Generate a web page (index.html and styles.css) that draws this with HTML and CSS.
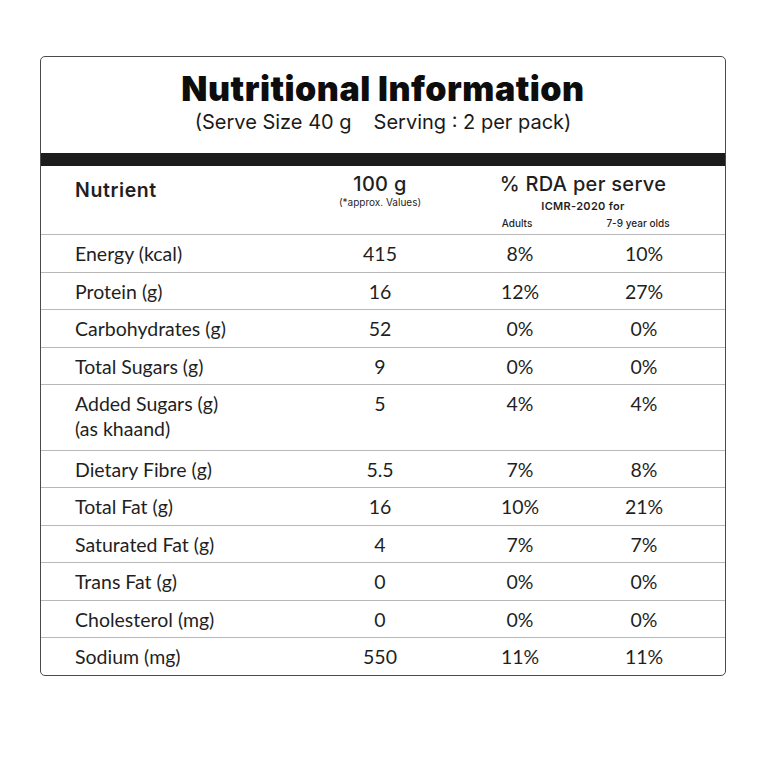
FILE: index.html
```html
<!DOCTYPE html>
<html lang="en">
<head>
<meta charset="utf-8">
<title>Nutritional Information</title>
<link rel="stylesheet" href="styles.css">
</head>
<body>
<div class="card">
  <header class="head">
    <h1 class="title">Nutritional Information</h1>
    <p class="sub">(Serve Size 40 g<span class="gap"></span>Serving : 2 per pack)</p>
  </header>
  <div class="bar"></div>
  <div class="thead">
    <div class="th-name">Nutrient</div>
    <div class="th-qty">
      <div class="th-big">100 g</div>
      <div class="th-note">(*approx. Values)</div>
    </div>
    <div class="th-rda">
      <div class="th-big">% RDA per serve</div>
      <div class="th-icmr">ICMR-2020 for</div>
      <div class="th-groups">
        <span>Adults</span>
        <span>7-9 year olds</span>
      </div>
    </div>
  </div>
  <div class="row"><div class="c-name">Energy (kcal)</div><div class="c-val">415</div><div class="c-val">8%</div><div class="c-val">10%</div></div>
  <div class="row"><div class="c-name">Protein (g)</div><div class="c-val">16</div><div class="c-val">12%</div><div class="c-val">27%</div></div>
  <div class="row"><div class="c-name">Carbohydrates (g)</div><div class="c-val">52</div><div class="c-val">0%</div><div class="c-val">0%</div></div>
  <div class="row"><div class="c-name">Total Sugars (g)</div><div class="c-val">9</div><div class="c-val">0%</div><div class="c-val">0%</div></div>
  <div class="row tall"><div class="c-name">Added Sugars (g)<br>(as khaand)</div><div class="c-val">5</div><div class="c-val">4%</div><div class="c-val">4%</div></div>
  <div class="row"><div class="c-name">Dietary Fibre (g)</div><div class="c-val">5.5</div><div class="c-val">7%</div><div class="c-val">8%</div></div>
  <div class="row"><div class="c-name">Total Fat (g)</div><div class="c-val">16</div><div class="c-val">10%</div><div class="c-val">21%</div></div>
  <div class="row"><div class="c-name">Saturated Fat (g)</div><div class="c-val">4</div><div class="c-val">7%</div><div class="c-val">7%</div></div>
  <div class="row"><div class="c-name">Trans Fat (g)</div><div class="c-val">0</div><div class="c-val">0%</div><div class="c-val">0%</div></div>
  <div class="row"><div class="c-name">Cholesterol (mg)</div><div class="c-val">0</div><div class="c-val">0%</div><div class="c-val">0%</div></div>
  <div class="row"><div class="c-name">Sodium (mg)</div><div class="c-val">550</div><div class="c-val">11%</div><div class="c-val">11%</div></div>
</div>
</body>
</html>
```
FILE: styles.css
```css
html, body {
  margin: 0;
  padding: 0;
  background: #ffffff;
}
body {
  padding: 56px 0 0 40px;
  color: #1f1f1f;
}
.card {
  width: 684px;
  border: 1.5px solid #4a4a4a;
  border-radius: 5px;
  overflow: hidden;
  background: #fff;
}
.head {
  height: 96px;
  display: flex;
  flex-direction: column;
  align-items: center;
  box-sizing: border-box;
  padding-top: 12px;
}
.title {
  margin: 0;
  font-family: Inter, "Liberation Sans", sans-serif;
  font-weight: 900;
  font-size: 34px;
  line-height: 40px;
  color: #0d0d0d;
  letter-spacing: 0.5px;
}
.sub {
  margin: 0;
  font-family: Inter, "Liberation Sans", sans-serif;
  font-weight: 400;
  font-size: 20px;
  line-height: 26px;
  color: #1a1a1a;
}
.gap {
  display: inline-block;
  width: 22px;
}
.bar {
  height: 13px;
  background: #1c1c1c;
}
.thead,
.row {
  display: grid;
  grid-template-columns: 268px 142px 138px 110px;
}
.thead {
  height: 68px;
  box-sizing: border-box;
  padding-top: 7px;
  font-family: Inter, "Liberation Sans", sans-serif;
}
.th-name {
  padding-left: 34px;
  font-weight: 600;
  font-size: 19.5px;
  letter-spacing: 0.6px;
  line-height: 26px;
  padding-top: 4px;
}
.th-qty {
  text-align: center;
}
.th-big {
  font-weight: 500;
  font-size: 20px;
  letter-spacing: 0.3px;
  line-height: 22px;
}
.th-note {
  font-size: 10px;
  line-height: 12px;
  margin-top: 1px;
}
.th-rda {
  grid-column: 3 / span 2;
  display: grid;
  grid-template-columns: 138px 110px;
  text-align: center;
  padding-left: 8px;
}
.th-rda .th-big,
.th-icmr {
  grid-column: 1 / span 2;
}
.th-icmr {
  font-weight: 600;
  font-size: 11px;
  line-height: 14px;
  letter-spacing: 0.3px;
}
.th-groups {
  grid-column: 1 / span 2;
  display: grid;
  grid-template-columns: 132px 110px;
  font-size: 10px;
  font-weight: 500;
  line-height: 14px;
  margin-left: -8px;
  margin-top: 0;
}
.row {
  border-top: 1.5px solid #b8b8b8;
  padding: 6px 0 5.5px;
  font-family: Lato, "Liberation Sans", sans-serif;
  font-size: 19.5px;
  line-height: 25px;
  color: #1f1f1f;
}
.c-name {
  padding-left: 34px;
}
.c-val {
  text-align: center;
}
.tall {
  padding-bottom: 8.5px;
}
```
